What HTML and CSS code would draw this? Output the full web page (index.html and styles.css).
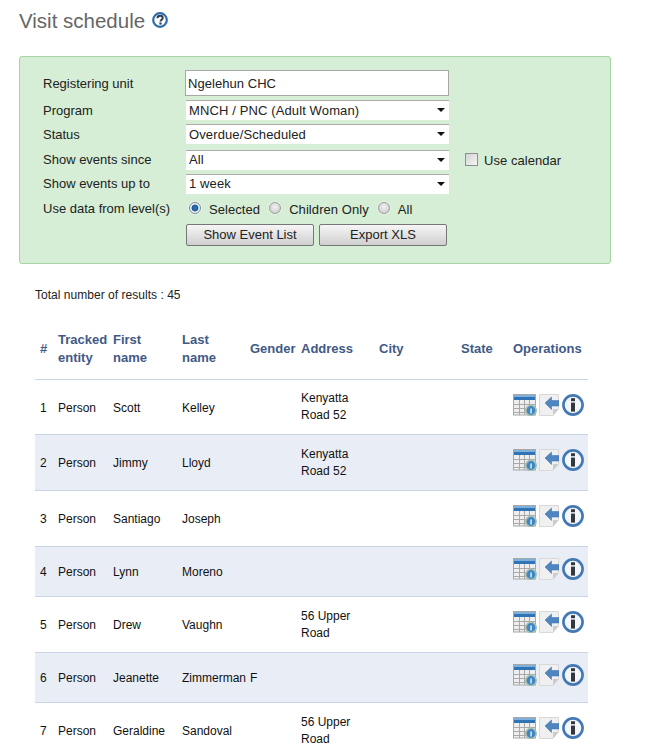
FILE: index.html
```html
<!DOCTYPE html>
<html lang="en">
<head>
    <meta charset="UTF-8">
    <meta name="viewport" content="width=device-width, initial-scale=1.0">
    <title>Visit schedule</title>
    <link rel="stylesheet" href="styles.css">
</head>
<body>

    <svg class="sprites" width="0" height="0">
        <symbol id="iconCalendar" viewBox="0 0 24 22">
            <rect x="0.5" y="0.5" width="22" height="20.5" fill="#eeeeee" stroke="#a8a8a8"/>
            <rect x="1" y="1" width="21" height="2" fill="#7fb0dc"/>
            <rect x="1" y="3" width="21" height="3" fill="#2f75b5"/>
            <path d="M1 10.5H22M1 14.5H22M1 18.5H22M6.5 6V21M11.5 6V21M16.5 6V21" stroke="#a9a9a9" stroke-width="1" fill="none"/>
            <circle cx="18" cy="16.5" r="5.2" fill="#3d87c4" stroke="#a9c0b0" stroke-width="1.6"/>
            <rect x="17.3" y="14.5" width="1.5" height="5" fill="#dfeaf4"/>
        </symbol>
        <symbol id="iconBack" viewBox="0 0 20 22">
            <path d="M0.5 0.5H19.5V15L14 21.5H0.5Z" fill="#f0f0f0" stroke="#d8d8d8"/>
            <path d="M19.5 15L14 21.5V15Z" fill="#cccccc"/>
            <path d="M6 9L12.5 3V6.5H20V12H12.5V15.5Z" fill="#4f86c0" stroke="#3a6ea8" stroke-width="0.5"/>
        </symbol>
        <symbol id="iconInfo" viewBox="0 0 22 22">
            <circle cx="11" cy="11" r="9.6" fill="#f3f6fa" stroke="#4378b4" stroke-width="2.6"/>
            <rect x="9" y="4.2" width="4" height="3" fill="#33383f"/>
            <rect x="9" y="8.6" width="4" height="9" fill="#33383f"/>
        </symbol>
    </svg>

    <h2 class="page-title">Visit schedule
        <svg class="help-icon" width="16" height="16" viewBox="0 0 16 16">
            <circle cx="8" cy="8" r="6.8" fill="#ffffff" stroke="#2f6da8" stroke-width="2.2"/>
            <path d="M5.4 6.3C5.5 4.6 6.7 3.8 8.1 3.8C9.7 3.8 10.7 4.8 10.7 6C10.7 7.7 8.5 7.8 8.5 9.6" fill="none" stroke="#2b3d52" stroke-width="2"/>
            <rect x="7.4" y="10.5" width="2.2" height="2.1" fill="#2b3d52"/>
        </svg>
    </h2>

    <form class="filter-panel">
        <div class="form-row row-input">
            <label class="form-label" for="orgUnit">Registering unit</label>
            <input class="text-field" type="text" id="orgUnit" value="Ngelehun CHC">
        </div>
        <div class="form-row row-select">
            <label class="form-label" for="program">Program</label>
            <div class="select-wrap">
                <select id="program"><option>MNCH / PNC (Adult Woman)</option></select>
            </div>
        </div>
        <div class="form-row row-select">
            <label class="form-label" for="status">Status</label>
            <div class="select-wrap">
                <select id="status"><option>Overdue/Scheduled</option></select>
            </div>
        </div>
        <div class="form-row row-select row-spaced row-raised">
            <label class="form-label" for="since">Show events since</label>
            <div class="select-wrap">
                <select id="since"><option>All</option></select>
            </div>
            <label class="calendar-toggle"><input class="check" type="checkbox">Use calendar</label>
        </div>
        <div class="form-row row-select row-raised">
            <label class="form-label" for="upTo">Show events up to</label>
            <div class="select-wrap">
                <select id="upTo"><option>1 week</option></select>
            </div>
        </div>
        <div class="form-row row-radios">
            <span class="form-label">Use data from level(s)</span>
            <div class="radio-group">
                <label class="radio-item"><input class="radio" type="radio" name="level" checked>Selected</label>
                <label class="radio-item"><input class="radio" type="radio" name="level">Children Only</label>
                <label class="radio-item"><input class="radio" type="radio" name="level">All</label>
            </div>
        </div>
        <div class="form-row row-buttons">
            <span class="form-label"></span>
            <div class="button-group">
                <button class="btn" type="button">Show Event List</button>
                <button class="btn" type="button">Export XLS</button>
            </div>
        </div>
    </form>

    <p class="result-count">Total number of results : 45</p>

    <table class="result-table">
        <colgroup>
            <col class="col-num"><col class="col-entity"><col class="col-first"><col class="col-last"><col class="col-gender"><col class="col-address"><col class="col-city"><col class="col-state"><col class="col-ops">
        </colgroup>
        <thead>
            <tr>
                <th>#</th><th>Tracked entity</th><th>First name</th><th>Last name</th><th>Gender</th><th>Address</th><th>City</th><th>State</th><th>Operations</th>
            </tr>
        </thead>
        <tbody>
            <tr class="row-first">
                <td>1</td><td>Person</td><td>Scott</td><td>Kelley</td><td></td><td class="cell-address">Kenyatta Road 52</td><td></td><td></td>
                <td><div class="ops"><svg class="op-cal"><use href="#iconCalendar"/></svg><svg class="op-back"><use href="#iconBack"/></svg><svg class="op-info"><use href="#iconInfo"/></svg></div></td>
            </tr>
            <tr class="row-tall row-alt">
                <td>2</td><td>Person</td><td>Jimmy</td><td>Lloyd</td><td></td><td class="cell-address">Kenyatta Road 52</td><td></td><td></td>
                <td><div class="ops"><svg class="op-cal"><use href="#iconCalendar"/></svg><svg class="op-back"><use href="#iconBack"/></svg><svg class="op-info"><use href="#iconInfo"/></svg></div></td>
            </tr>
            <tr class="row-tall">
                <td>3</td><td>Person</td><td>Santiago</td><td>Joseph</td><td></td><td></td><td></td><td></td>
                <td><div class="ops"><svg class="op-cal"><use href="#iconCalendar"/></svg><svg class="op-back"><use href="#iconBack"/></svg><svg class="op-info"><use href="#iconInfo"/></svg></div></td>
            </tr>
            <tr class="row-short row-alt">
                <td>4</td><td>Person</td><td>Lynn</td><td>Moreno</td><td></td><td></td><td></td><td></td>
                <td><div class="ops"><svg class="op-cal"><use href="#iconCalendar"/></svg><svg class="op-back"><use href="#iconBack"/></svg><svg class="op-info"><use href="#iconInfo"/></svg></div></td>
            </tr>
            <tr class="row-tall">
                <td>5</td><td>Person</td><td>Drew</td><td>Vaughn</td><td></td><td class="cell-address">56 Upper Road</td><td></td><td></td>
                <td><div class="ops"><svg class="op-cal"><use href="#iconCalendar"/></svg><svg class="op-back"><use href="#iconBack"/></svg><svg class="op-info"><use href="#iconInfo"/></svg></div></td>
            </tr>
            <tr class="row-short row-alt">
                <td>6</td><td>Person</td><td>Jeanette</td><td>Zimmerman</td><td>F</td><td></td><td></td><td></td>
                <td><div class="ops"><svg class="op-cal"><use href="#iconCalendar"/></svg><svg class="op-back"><use href="#iconBack"/></svg><svg class="op-info"><use href="#iconInfo"/></svg></div></td>
            </tr>
            <tr class="row-tall">
                <td>7</td><td>Person</td><td>Geraldine</td><td>Sandoval</td><td></td><td class="cell-address">56 Upper Road</td><td></td><td></td>
                <td><div class="ops"><svg class="op-cal"><use href="#iconCalendar"/></svg><svg class="op-back"><use href="#iconBack"/></svg><svg class="op-info"><use href="#iconInfo"/></svg></div></td>
            </tr>
        </tbody>
    </table>

</body>
</html>
```

FILE: styles.css
```css
html, body {
    height: 752px;
    overflow: hidden;
}

body {
    font-family: "Liberation Sans", Arial, sans-serif;
    font-size: 13px;
    color: #222222;
    background-color: #ffffff;
    margin: 0;
    padding: 0 19px;
}

.sprites {
    display: block;
    height: 0;
}

.page-title {
    display: flex;
    align-items: center;
    gap: 7px;
    height: 42px;
    margin: 0 0 14px 0;
    font-size: 20.5px;
    font-weight: normal;
    color: #666666;
}

.help-icon {
    margin-top: -3px;
}

.filter-panel {
    box-sizing: border-box;
    width: 592px;
    height: 208px;
    padding: 13px 0 0 23px;
    background-color: #d5eed5;
    border: 1px solid #a6d5a6;
    border-radius: 3px;
}

.form-row {
    display: flex;
    align-items: center;
}

.form-label {
    width: 142px;
    flex: none;
}

.row-input {
    height: 26px;
    margin-bottom: 4px;
}

.row-select {
    height: 20px;
    margin-bottom: 4px;
}

.row-spaced {
    margin-top: 6px;
}

.row-raised select {
    padding-bottom: 2px;
}

.row-raised .form-label {
    margin-bottom: 2px;
}

.row-radios {
    height: 20px;
    margin-top: 5px;
    margin-bottom: 5px;
}

.row-radios .form-label {
    margin-bottom: 2px;
}

.row-buttons {
    height: 22px;
}

.text-field {
    box-sizing: border-box;
    width: 264px;
    height: 26px;
    padding: 0 2px;
    font-family: inherit;
    font-size: 13px;
    letter-spacing: 0.05px;
    color: #222222;
    background-color: #ffffff;
    border: 1px solid #a8a8a8;
    border-radius: 0;
    outline: none;
}

.select-wrap {
    position: relative;
    width: 263px;
    margin-left: 1px;
}

.select-wrap::after {
    content: "";
    position: absolute;
    right: 4px;
    top: 8px;
    border-left: 4px solid transparent;
    border-right: 4px solid transparent;
    border-top: 4px solid #111111;
    pointer-events: none;
}

select {
    display: block;
    box-sizing: border-box;
    width: 100%;
    height: 20px;
    padding: 0 0 0 3px;
    font-family: inherit;
    font-size: 13px;
    letter-spacing: 0.12px;
    color: #222222;
    background-color: #ffffff;
    border: none;
    border-top: 1px solid #ababab;
    border-radius: 0;
    appearance: none;
    -webkit-appearance: none;
}

.calendar-toggle {
    display: flex;
    align-items: center;
    margin-left: 16px;
    letter-spacing: 0.05px;
}

.check {
    box-sizing: border-box;
    width: 13px;
    height: 13px;
    margin: 0 6px 2px 0;
    border: 1px solid #8f8f8f;
    background: linear-gradient(135deg, #d4d4d4, #f4f4f4);
    appearance: none;
    -webkit-appearance: none;
}

.radio-group {
    display: flex;
    gap: 9px;
    margin-left: 4px;
    letter-spacing: 0.07px;
}

.radio-item {
    display: flex;
    align-items: center;
}

.radio {
    box-sizing: border-box;
    width: 12px;
    height: 12px;
    margin: 0 8px 2px 0;
    border: 1px solid #a0a0a0;
    border-radius: 50%;
    background: radial-gradient(circle at 50% 40%, #f2f2f2, #c4c4c4);
    box-shadow: 0 0 0 1px #e6f2e6;
    appearance: none;
    -webkit-appearance: none;
}

.radio:checked {
    border-color: #7f8f9e;
    background: radial-gradient(circle, #2f7cc0 0, #1c5a98 42%, #e8eef2 54%, #dfe5e8 100%);
}

.button-group {
    display: flex;
    gap: 5px;
    margin-left: 1px;
}

.btn {
    box-sizing: border-box;
    width: 128px;
    height: 22px;
    padding: 0 0 2px 0;
    font-family: inherit;
    font-size: 13px;
    color: #222222;
    background: linear-gradient(#f6f6f6, #cfcfcf);
    border: 1px solid #777777;
    border-radius: 2px;
}

.result-count {
    height: 14px;
    margin: 24px 0 0 16px;
    font-size: 12px;
    line-height: 14px;
    letter-spacing: 0.03px;
}

.result-table {
    width: 553px;
    margin: 18px 0 0 16px;
    table-layout: fixed;
    border-collapse: separate;
    border-spacing: 0;
    font-size: 12px;
}

.col-num { width: 18px; }
.col-entity { width: 55px; }
.col-first { width: 69px; }
.col-last { width: 68px; }
.col-gender { width: 51px; }
.col-address { width: 78px; }
.col-city { width: 82px; }
.col-state { width: 52px; }
.col-ops { width: 80px; }

.result-table th {
    height: 60px;
    box-sizing: border-box;
    padding: 0 0 2px 5px;
    font-size: 13px;
    line-height: 18px;
    text-align: left;
    color: #3f5a87;
    border-bottom: 1px solid #c9d5e6;
}

.result-table td {
    padding: 2px 0 0 5px;
    line-height: 17px;
    color: #111111;
    border-bottom: 1px solid #c9d5e6;
}

.result-table .cell-address {
    padding-top: 0;
}

.row-first { height: 55px; }
.row-tall { height: 56px; }
.row-short { height: 50px; }

.row-alt td {
    background-color: #e9eef6;
}

.ops {
    display: flex;
    align-items: center;
    margin-bottom: 7px;
}

.ops svg {
    filter: blur(0.3px);
}

.op-cal {
    width: 24px;
    height: 22px;
    margin-right: 2px;
}

.op-back {
    width: 20px;
    height: 22px;
    margin-right: 3px;
}

.op-info {
    width: 22px;
    height: 22px;
    flex: none;
}
```
